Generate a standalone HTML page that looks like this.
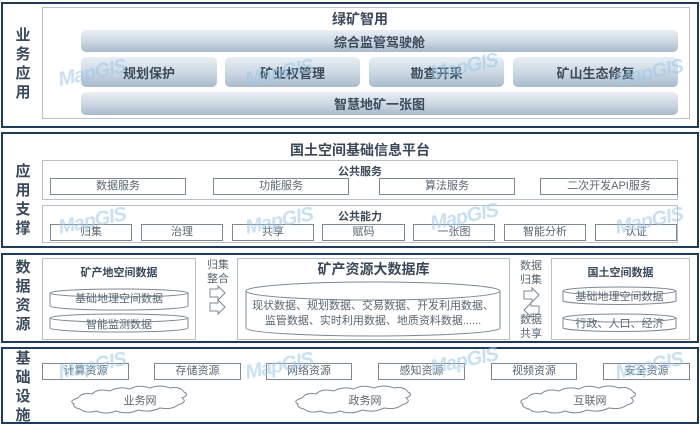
<!DOCTYPE html>
<html><head><meta charset="utf-8"><style>
*{margin:0;padding:0;box-sizing:border-box}
body{width:700px;height:430px;background:#fff;position:relative;overflow:hidden;font-family:"Liberation Sans","Noto Sans CJK SC",sans-serif;color:#3e4c5c}
.a{position:absolute}
.sec{position:absolute;left:1px;width:698px;border:2px solid #1f3a5a;background:#fff}
.lab{position:absolute;left:14px;width:18px;font-size:15px;font-weight:bold;line-height:19px;text-align:center;color:#3a4a5c}
.gb{position:absolute;border:1px solid #b8c0c8}
.bar{position:absolute;border-radius:5px;background:linear-gradient(#e9eff5,#c7d4e0 60%,#a7b9ca);display:flex;align-items:center;justify-content:center;font-weight:bold;font-size:13px;color:#3c4b5b}
.bx{position:absolute;border:1px solid #7d8894;height:17px;font-size:11px;line-height:15px;text-align:center;color:#5a6673;background:#fff}
.t{position:absolute;font-weight:bold;text-align:center;color:#3a4858}
.wm{position:absolute;font:bold italic 20px "Liberation Sans",sans-serif;color:#9cc8e8;opacity:.55;transform:rotate(-12deg);letter-spacing:-1px}
.sm{position:absolute;font-size:11px;line-height:14px;color:#5a6673;text-align:center}
</style></head><body>

<!-- Section 1 -->
<div class="sec" style="top:2px;height:126px"></div>
<div class="lab" style="top:26px">业<br>务<br>应<br>用</div>
<div class="gb" style="left:42px;top:7px;width:648px;height:112px"></div>
<div class="t" style="left:42px;width:636px;top:9px;font-size:14px">绿矿智用</div>
<div class="bar" style="left:81px;top:30px;width:597px;height:22px">综合监管驾驶舱</div>
<div class="bar" style="left:81px;top:57px;width:136px;height:30px">规划保护</div>
<div class="bar" style="left:225px;top:57px;width:135px;height:30px">矿业权管理</div>
<div class="bar" style="left:369px;top:57px;width:135px;height:30px">勘查开采</div>
<div class="bar" style="left:513px;top:57px;width:165px;height:30px">矿山生态修复</div>
<div class="bar" style="left:81px;top:92px;width:597px;height:23px">智慧地矿一张图</div>

<!-- Section 2 -->
<div class="sec" style="top:132px;height:116px"></div>
<div class="lab" style="top:162px">应<br>用<br>支<br>撑</div>
<div class="t" style="left:42px;width:636px;top:140px;font-size:14px">国土空间基础信息平台</div>
<div class="gb" style="left:42px;top:160px;width:636px;height:40px"></div>
<div class="t" style="left:42px;width:636px;top:163px;font-size:11px">公共服务</div>
<div class="bx" style="left:50px;top:178px;width:136px">数据服务</div>
<div class="bx" style="left:213px;top:178px;width:136px">功能服务</div>
<div class="bx" style="left:379px;top:178px;width:136px">算法服务</div>
<div class="bx" style="left:540px;top:178px;width:138px">二次开发API服务</div>
<div class="gb" style="left:42px;top:205px;width:636px;height:38px"></div>
<div class="t" style="left:42px;width:636px;top:208px;font-size:11px">公共能力</div>
<div class="bx" style="left:50px;top:224px;width:82px">归集</div>
<div class="bx" style="left:141px;top:224px;width:82px">治理</div>
<div class="bx" style="left:232px;top:224px;width:82px">共享</div>
<div class="bx" style="left:322px;top:224px;width:83px">赋码</div>
<div class="bx" style="left:413px;top:224px;width:82px">一张图</div>
<div class="bx" style="left:504px;top:224px;width:82px">智能分析</div>
<div class="bx" style="left:595px;top:224px;width:82px">认证</div>

<!-- Section 3 -->
<div class="sec" style="top:253px;height:90px"></div>
<div class="lab" style="top:258px">数<br>据<br>资<br>源</div>
<div class="gb" style="left:42px;top:258px;width:154px;height:82px"></div>
<div class="t" style="left:42px;width:154px;top:264px;font-size:11px">矿产地空间数据</div>
<div class="gb" style="left:237px;top:258px;width:273px;height:82px"></div>
<div class="t" style="left:237px;width:273px;top:259px;font-size:14px">矿产资源大数据库</div>
<div class="gb" style="left:551px;top:258px;width:139px;height:82px"></div>
<div class="t" style="left:551px;width:139px;top:264px;font-size:11px">国土空间数据</div>
<svg class="a" style="left:0;top:0" width="700" height="430" fill="none" stroke="#7d8894" stroke-width="1">
 <!-- left cylinders -->
 <path d="M50 293 V306 A69 4 0 0 0 188 306 V293"/><ellipse cx="119" cy="293" rx="69" ry="4"/>
 <path d="M50 318 V328 A69 4 0 0 0 188 328 V318"/><ellipse cx="119" cy="318" rx="69" ry="4"/>
 <!-- big cylinder -->
 <path d="M246 291 V328 A127 8 0 0 0 500 328 V291"/><ellipse cx="373" cy="291" rx="127" ry="9"/>
 <!-- right cylinders -->
 <path d="M563 291 V301 A57 4 0 0 0 676 301 V291"/><ellipse cx="619.5" cy="291" rx="56.5" ry="4"/>
 <path d="M563 318 V328 A57 4 0 0 0 676 328 V318"/><ellipse cx="619.5" cy="318" rx="56.5" ry="4"/>
 <!-- arrows -->
 <path d="M210 289 H218 V286 L225 293 L218 300 V297 H210 Z"/>
 <path d="M210 303 H218 V300 L225 307 L218 314 V311 H210 Z"/>
 <path d="M524 291 H532 V288 L539 295 L532 302 V299 H524 Z"/>
 <path d="M539 306 H531 V303 L524 310 L531 317 V314 H539 Z"/>
 <!-- clouds -->
 <path d="M78 398 q4 -6 14 -4 q6 -6 18 -3 q8 -5 20 -2 q8 -5 20 -1 q10 -4 20 0 q10 -2 14 4 q6 3 -2 6 q6 4 -4 7 q-6 5 -18 3 q-10 5 -22 2 q-10 5 -22 1 q-10 4 -20 0 q-10 3 -16 -2 q-8 -2 -6 -5 q-6 -3 4 -6 z"/>
 <path d="M302 398 q4 -6 14 -4 q6 -6 18 -3 q8 -5 20 -2 q8 -5 20 -1 q10 -4 20 0 q10 -2 14 4 q6 3 -2 6 q6 4 -4 7 q-6 5 -18 3 q-10 5 -22 2 q-10 5 -22 1 q-10 4 -20 0 q-10 3 -16 -2 q-8 -2 -6 -5 q-6 -3 4 -6 z"/>
 <path d="M527 398 q4 -6 14 -4 q6 -6 18 -3 q8 -5 20 -2 q8 -5 20 -1 q10 -4 20 0 q10 -2 14 4 q6 3 -2 6 q6 4 -4 7 q-6 5 -18 3 q-10 5 -22 2 q-10 5 -22 1 q-10 4 -20 0 q-10 3 -16 -2 q-8 -2 -6 -5 q-6 -3 4 -6 z"/>
</svg>
<div class="sm" style="left:50px;width:138px;top:292px;font-size:11px">基础地理空间数据</div>
<div class="sm" style="left:50px;width:138px;top:318px;font-size:11px">智能监测数据</div>
<div class="sm" style="left:246px;width:254px;top:299px;line-height:15px">现状数据、规划数据、交易数据、开发利用数据、<br>监管数据、实时利用数据、地质资料数据......</div>
<div class="sm" style="left:563px;width:113px;top:290px">基础地理空间数据</div>
<div class="sm" style="left:563px;width:113px;top:317px">行政、人口、经济</div>
<div class="sm" style="left:202px;width:32px;top:258px;line-height:14px">归集<br>整合</div>
<div class="sm" style="left:515px;width:32px;top:259px;line-height:14px">数据<br>归集</div>
<div class="sm" style="left:515px;width:32px;top:313px;line-height:14px">数据<br>共享</div>

<!-- Section 4 -->
<div class="sec" style="top:347px;height:77px;background:transparent"></div>
<div class="lab" style="top:349px;line-height:19px">基<br>础<br>设<br>施</div>
<div class="bx" style="left:42px;top:363px;width:87px">计算资源</div>
<div class="bx" style="left:154px;top:363px;width:87px">存储资源</div>
<div class="bx" style="left:266px;top:363px;width:86px">网络资源</div>
<div class="bx" style="left:378px;top:363px;width:87px">感知资源</div>
<div class="bx" style="left:491px;top:363px;width:86px">视频资源</div>
<div class="bx" style="left:603px;top:363px;width:87px">安全资源</div>
<div class="sm" style="left:90px;width:100px;top:394px">业务网</div>
<div class="sm" style="left:315px;width:100px;top:394px">政务网</div>
<div class="sm" style="left:540px;width:100px;top:394px">互联网</div>

<!-- watermarks -->
<div class="wm" style="left:58px;top:62px">MapGIS</div>
<div class="wm" style="left:245px;top:62px">MapGIS</div>
<div class="wm" style="left:430px;top:56px">MapGIS</div>
<div class="wm" style="left:615px;top:62px">MapGIS</div>
<div class="wm" style="left:58px;top:210px">MapGIS</div>
<div class="wm" style="left:245px;top:210px">MapGIS</div>
<div class="wm" style="left:430px;top:206px">MapGIS</div>
<div class="wm" style="left:615px;top:210px">MapGIS</div>
<div class="wm" style="left:58px;top:355px">MapGIS</div>
<div class="wm" style="left:245px;top:355px">MapGIS</div>
<div class="wm" style="left:430px;top:350px">MapGIS</div>
<div class="wm" style="left:615px;top:355px">MapGIS</div>
</body></html>
